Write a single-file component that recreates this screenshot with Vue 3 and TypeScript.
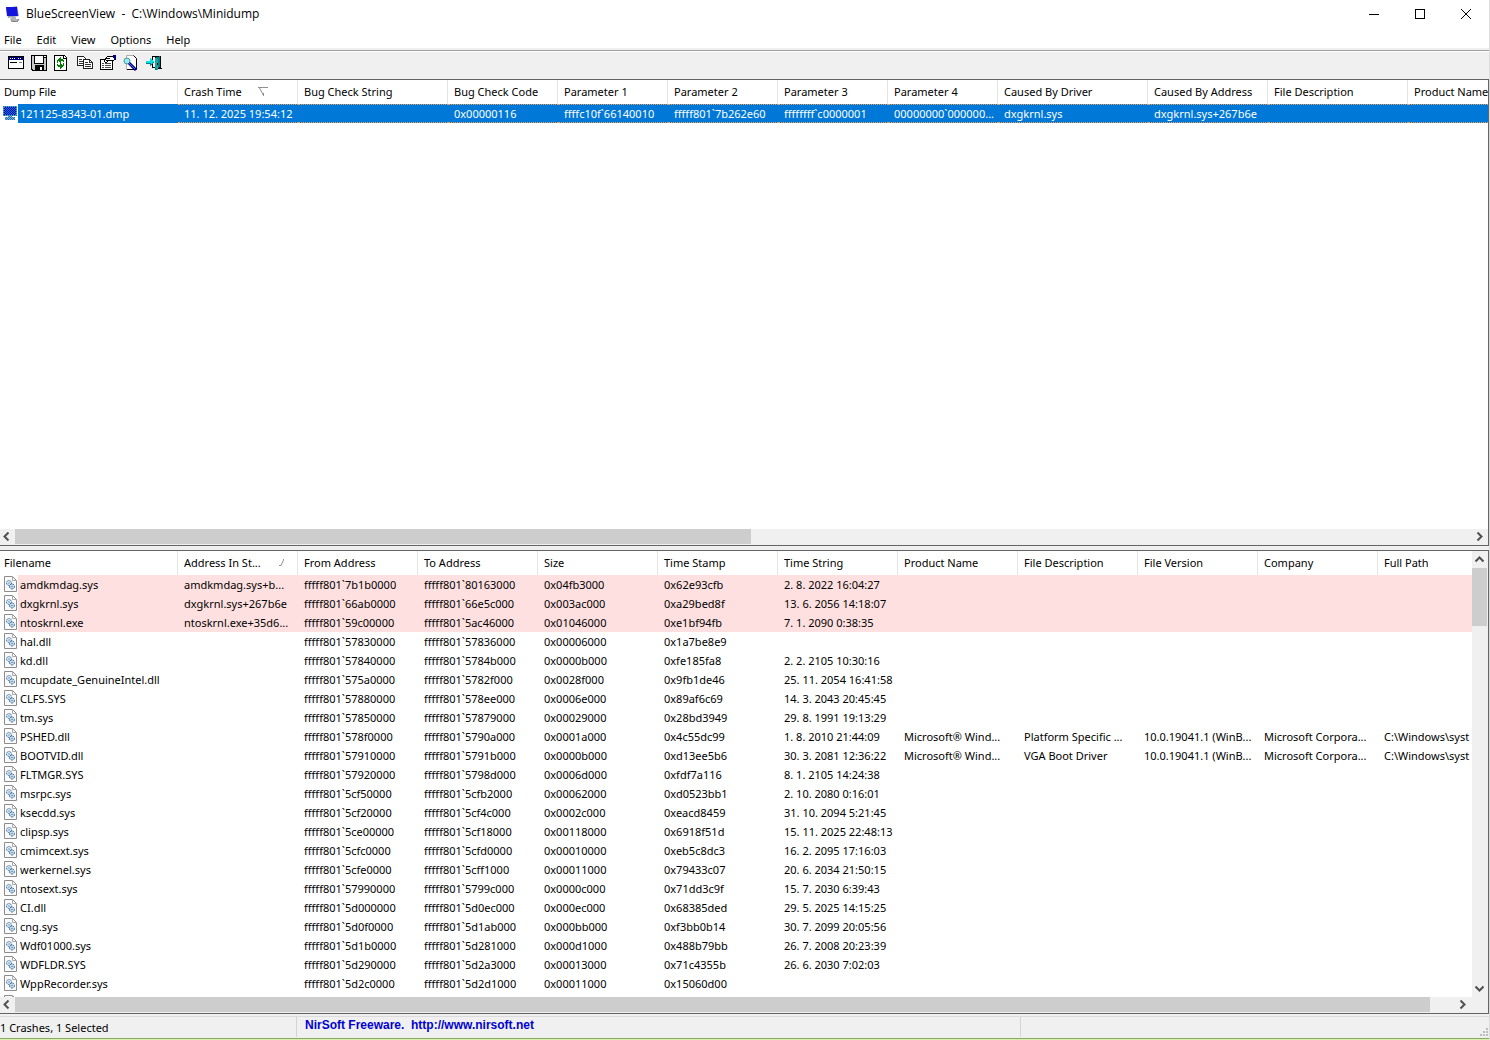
<script setup lang="ts">
interface Column {
  label: string
  width: number
  sort?: 'asc' | 'desc'
}

const menus: string[] = ['File', 'Edit', 'View', 'Options', 'Help']

const crashColumns: Column[] = [
  { label: 'Dump File', width: 178 },
  { label: 'Crash Time', width: 120, sort: 'desc' },
  { label: 'Bug Check String', width: 150 },
  { label: 'Bug Check Code', width: 110 },
  { label: 'Parameter 1', width: 110 },
  { label: 'Parameter 2', width: 110 },
  { label: 'Parameter 3', width: 110 },
  { label: 'Parameter 4', width: 110 },
  { label: 'Caused By Driver', width: 150 },
  { label: 'Caused By Address', width: 120 },
  { label: 'File Description', width: 140 },
  { label: 'Product Name', width: 140 },
]

const crash: string[] = [
  '121125-8343-01.dmp', '11. 12. 2025 19:54:12', '', '0x00000116', 'ffffc10f`66140010',
  'fffff801`7b262e60', 'ffffffff`c0000001', '00000000`000000...', 'dxgkrnl.sys',
  'dxgkrnl.sys+267b6e', '', '',
]

const driverColumns: Column[] = [
  { label: 'Filename', width: 178 },
  { label: 'Address In St...', width: 120, sort: 'asc' },
  { label: 'From Address', width: 120 },
  { label: 'To Address', width: 120 },
  { label: 'Size', width: 120 },
  { label: 'Time Stamp', width: 120 },
  { label: 'Time String', width: 120 },
  { label: 'Product Name', width: 120 },
  { label: 'File Description', width: 120 },
  { label: 'File Version', width: 120 },
  { label: 'Company', width: 120 },
  { label: 'Full Path', width: 180 },
]

const drivers: string[][] = [
  ['amdkmdag.sys', 'amdkmdag.sys+b...', 'fffff801`7b1b0000', 'fffff801`80163000', '0x04fb3000', '0x62e93cfb', '2. 8. 2022 16:04:27'],
  ['dxgkrnl.sys', 'dxgkrnl.sys+267b6e', 'fffff801`66ab0000', 'fffff801`66e5c000', '0x003ac000', '0xa29bed8f', '13. 6. 2056 14:18:07'],
  ['ntoskrnl.exe', 'ntoskrnl.exe+35d6...', 'fffff801`59c00000', 'fffff801`5ac46000', '0x01046000', '0xe1bf94fb', '7. 1. 2090 0:38:35'],
  ['hal.dll', '', 'fffff801`57830000', 'fffff801`57836000', '0x00006000', '0x1a7be8e9', ''],
  ['kd.dll', '', 'fffff801`57840000', 'fffff801`5784b000', '0x0000b000', '0xfe185fa8', '2. 2. 2105 10:30:16'],
  ['mcupdate_GenuineIntel.dll', '', 'fffff801`575a0000', 'fffff801`5782f000', '0x0028f000', '0x9fb1de46', '25. 11. 2054 16:41:58'],
  ['CLFS.SYS', '', 'fffff801`57880000', 'fffff801`578ee000', '0x0006e000', '0x89af6c69', '14. 3. 2043 20:45:45'],
  ['tm.sys', '', 'fffff801`57850000', 'fffff801`57879000', '0x00029000', '0x28bd3949', '29. 8. 1991 19:13:29'],
  ['PSHED.dll', '', 'fffff801`578f0000', 'fffff801`5790a000', '0x0001a000', '0x4c55dc99', '1. 8. 2010 21:44:09', 'Microsoft® Wind...', 'Platform Specific ...', '10.0.19041.1 (WinB...', 'Microsoft Corpora...', 'C:\\Windows\\syst'],
  ['BOOTVID.dll', '', 'fffff801`57910000', 'fffff801`5791b000', '0x0000b000', '0xd13ee5b6', '30. 3. 2081 12:36:22', 'Microsoft® Wind...', 'VGA Boot Driver', '10.0.19041.1 (WinB...', 'Microsoft Corpora...', 'C:\\Windows\\syst'],
  ['FLTMGR.SYS', '', 'fffff801`57920000', 'fffff801`5798d000', '0x0006d000', '0xfdf7a116', '8. 1. 2105 14:24:38'],
  ['msrpc.sys', '', 'fffff801`5cf50000', 'fffff801`5cfb2000', '0x00062000', '0xd0523bb1', '2. 10. 2080 0:16:01'],
  ['ksecdd.sys', '', 'fffff801`5cf20000', 'fffff801`5cf4c000', '0x0002c000', '0xeacd8459', '31. 10. 2094 5:21:45'],
  ['clipsp.sys', '', 'fffff801`5ce00000', 'fffff801`5cf18000', '0x00118000', '0x6918f51d', '15. 11. 2025 22:48:13'],
  ['cmimcext.sys', '', 'fffff801`5cfc0000', 'fffff801`5cfd0000', '0x00010000', '0xeb5c8dc3', '16. 2. 2095 17:16:03'],
  ['werkernel.sys', '', 'fffff801`5cfe0000', 'fffff801`5cff1000', '0x00011000', '0x79433c07', '20. 6. 2034 21:50:15'],
  ['ntosext.sys', '', 'fffff801`57990000', 'fffff801`5799c000', '0x0000c000', '0x71dd3c9f', '15. 7. 2030 6:39:43'],
  ['CI.dll', '', 'fffff801`5d000000', 'fffff801`5d0ec000', '0x000ec000', '0x68385ded', '29. 5. 2025 14:15:25'],
  ['cng.sys', '', 'fffff801`5d0f0000', 'fffff801`5d1ab000', '0x000bb000', '0xf3bb0b14', '30. 7. 2099 20:05:56'],
  ['Wdf01000.sys', '', 'fffff801`5d1b0000', 'fffff801`5d281000', '0x000d1000', '0x488b79bb', '26. 7. 2008 20:23:39'],
  ['WDFLDR.SYS', '', 'fffff801`5d290000', 'fffff801`5d2a3000', '0x00013000', '0x71c4355b', '26. 6. 2030 7:02:03'],
  ['WppRecorder.sys', '', 'fffff801`5d2c0000', 'fffff801`5d2d1000', '0x00011000', '0x15060d00', ''],
  [''],
]

const inStackCount = 3
</script>

<template>
  <div class="window">
    <header class="titlebar">
      <svg class="app-icon" width="16" height="16" viewBox="0 0 16 16" aria-hidden="true">
        <path d="M1 2 L12 0 L14 10 L3 12 Z" fill="#9aa4b8" />
        <path d="M1 1 L12 1 L13 10 L2 10 Z" fill="#1414dc" />
        <path d="M7 11 L11 11 L11 13 L14 13 L12 16 L6 15 L5 13 Z" fill="#b4b4b8" />
        <path d="M6 15 L12 16 L14 13" fill="none" stroke="#77777c" />
      </svg>
      <h1 class="title">BlueScreenView&nbsp; -&nbsp; C:\Windows\Minidump</h1>
      <div class="caption-buttons">
        <button type="button" aria-label="Minimize">
          <svg width="12" height="12" viewBox="0 0 12 12"><path d="M1 6.5H11" stroke="#000" /></svg>
        </button>
        <button type="button" aria-label="Maximize">
          <svg width="12" height="12" viewBox="0 0 12 12"><rect x="1.5" y="1.5" width="9" height="9" fill="none" stroke="#000" /></svg>
        </button>
        <button type="button" aria-label="Close">
          <svg width="12" height="12" viewBox="0 0 12 12"><path d="M1 1L11 11M11 1L1 11" stroke="#000" /></svg>
        </button>
      </div>
    </header>

    <nav class="menubar">
      <button v-for="menu in menus" :key="menu" type="button">{{ menu }}</button>
    </nav>

    <div class="toolbar" role="toolbar">
      <button type="button" aria-label="Advanced options">
        <svg width="16" height="16" viewBox="0 0 16 16" shape-rendering="crispEdges">
          <path d="M0 1H16V14H0Z" fill="#000" />
          <path d="M1 2H15V13H1Z" fill="#fff" />
          <path d="M1 2H15V5H1Z" fill="#000080" />
          <path d="M2 3h1v1h-1zM4 3h1v1h-1zM6 3h1v1h-1zM10 3h1v1h-1zM12 3h1v1h-1z" fill="#fff" />
          <path d="M2 7H9V8H2Z" fill="#000" />
          <path d="M11 7H14V8H11Z" fill="#808080" />
        </svg>
      </button>
      <button type="button" aria-label="Save">
        <svg width="16" height="16" viewBox="0 0 16 16" shape-rendering="crispEdges">
          <path d="M0 0H16V16H1L0 15Z" fill="#000" />
          <path d="M1 1H3V9H13V3H15V15H13V10H4V15H2L1 14Z" fill="#c8c8c8" />
          <path d="M4 1H12V8H4Z" fill="#fff" />
          <path d="M13 1H15V2H13Z" fill="#fff" />
          <path d="M5 11H11V15H5Z" fill="#000" />
          <path d="M9 12H11V15H9Z" fill="#fff" />
        </svg>
      </button>
      <button type="button" aria-label="Refresh">
        <svg width="16" height="16" viewBox="0 0 16 16" shape-rendering="crispEdges">
          <path d="M0 0H10L13 3V16H0Z" fill="#000" />
          <path d="M1 1H9V4H12V15H1Z" fill="#fff" />
          <path d="M10 1V3H12Z" fill="#fff" />
          <path d="M3 5H4V4H5V3H6V2H7V4H9V5H10V7H9V6H7V8H6V7H5V6H4V8H3Z" fill="#008000" />
          <path d="M10 11H9V12H8V13H7V14H6V12H4V11H3V9H4V10H6V8H7V9H8V10H9V8H10Z" fill="#008000" />
        </svg>
      </button>
      <button type="button" aria-label="Copy">
        <svg width="16" height="16" viewBox="0 0 16 16" shape-rendering="crispEdges">
          <path d="M.5 1.500H6.500L8.500 3.500V10.500H.5Z" fill="#fff" stroke="#202020" />
          <path d="M2 4.500H5M2 6.500H7M2 8.500H7" stroke="#303030" />
          <path d="M6.500 4.500H12.500L15.500 7.500V13.500H6.500Z" fill="#fff" stroke="#202020" />
          <path d="M12.500 4.500V7.500H15.500M8 7.500H11M8 9.500H14M8 11.500H14" fill="none" stroke="#303030" />
        </svg>
      </button>
      <button type="button" aria-label="Properties">
        <svg width="16" height="16" viewBox="0 0 16 16" shape-rendering="crispEdges">
          <path d="M.5 4.500H12.500V14.500H.5Z" fill="#fff" stroke="#000" />
          <path d="M2 8.500H4M5 8.500H11M2 10.500H4M5 10.500H11M2 12.500H4M5 12.500H11" stroke="#505050" />
          <path d="M4 6L8 1H12L14 3V5L11 6L9 5L6 8Z" fill="#fff" stroke="#000" />
          <path d="M7 3.500H10M6 5.500H8" stroke="#000" />
          <path d="M13 0H16V5H14V3H13Z" fill="#000080" />
        </svg>
      </button>
      <button type="button" aria-label="Find">
        <svg width="16" height="16" viewBox="0 0 16 16">
          <path d="M3.500 .5H10.500L13.500 3.500V14.500H3.500Z" fill="#fff" stroke="#b0b0b0" />
          <path d="M10.500 .5L13.500 3.500V14.500H4" fill="none" stroke="#000" />
          <circle cx="4" cy="6" r="3" fill="#8ff0f0" stroke="#5a8f9c" />
          <path d="M6 8L13 15" stroke="#000080" stroke-width="3" />
          <path d="M6 8L12 14" stroke="#3c6cf0" />
        </svg>
      </button>
      <button type="button" aria-label="Exit">
        <svg width="16" height="16" viewBox="0 0 16 16" shape-rendering="crispEdges">
          <path d="M6 1H15V13H16V14H12V15H10V13H6V9H7V12H9V2H7V5H6Z" fill="#000" />
          <path d="M9 3L14 1V12L10 15H9Z" fill="#008080" />
          <path d="M9 3L12 4V15L9 13Z" fill="#20a0a0" />
          <path d="M11 8H12V10H11Z" fill="#000" />
          <path d="M0 6H4V3L8 7L4 11V8H0Z" fill="#00e0e8" />
          <path d="M0 8H4V11L8 7" fill="none" stroke="#107880" />
        </svg>
      </button>
    </div>

    <main class="panes">
      <section class="pane crashes" aria-label="Crashes">
        <div class="list">
          <table>
            <colgroup><col v-for="c in crashColumns" :key="c.label" :style="{ width: c.width + 'px' }" /></colgroup>
            <thead>
              <tr>
                <th v-for="c in crashColumns" :key="c.label" scope="col">
                  <div class="head">
                    {{ c.label }}
                    <svg v-if="c.sort" class="desc" width="10" height="9" viewBox="0 0 10 9"><path d="M0 .5H10M1.500 1L5.500 8.500M5.500 6V9" fill="none" stroke="#909090" /></svg>
                  </div>
                </th>
              </tr>
            </thead>
            <tbody>
              <tr class="selected">
                <td v-for="(cell, i) in crash" :key="i">
                  <div v-if="i === 0" class="named">
                    <svg width="16" height="16" viewBox="0 0 16 16" shape-rendering="crispEdges" aria-hidden="true">
                      <defs>
                        <pattern id="dither" width="2" height="2" patternUnits="userSpaceOnUse">
                          <path d="M0 0H1V1H0ZM1 1H2V2H1Z" fill="#0078d7" />
                        </pattern>
                      </defs>
                      <path d="M1 1H15V11H1Z" fill="#8898b0" />
                      <path d="M2 2H14V10H2Z" fill="#0000a8" />
                      <path d="M6 11H10V12H13V15H3V12H6Z" fill="#a0a8b0" />
                      <path d="M1 1H15V11H10V12H13V15H3V12H6V11H1Z" fill="url(#dither)" />
                    </svg>
                    {{ cell }}
                  </div>
                  <template v-else>{{ cell }}</template>
                </td>
              </tr>
            </tbody>
          </table>
        </div>
        <div class="hscroll">
          <button type="button" aria-label="Scroll left"><svg width="7" height="9" viewBox="0 0 7 9"><path d="M5.500 .5L1.500 4.500L5.500 8.500" /></svg></button>
          <div class="track"><div class="thumb half"></div></div>
          <button type="button" aria-label="Scroll right"><svg width="7" height="9" viewBox="0 0 7 9"><path d="M1.500 .5L5.500 4.500L1.500 8.500" /></svg></button>
        </div>
      </section>

      <section class="pane drivers" aria-label="Drivers">
        <div class="with-vscroll">
          <div class="list">
            <table>
              <colgroup><col v-for="c in driverColumns" :key="c.label" :style="{ width: c.width + 'px' }" /></colgroup>
              <thead>
                <tr>
                  <th v-for="c in driverColumns" :key="c.label" scope="col">
                    <div class="head">
                      {{ c.label }}
                      <svg v-if="c.sort" class="asc" width="6" height="7" viewBox="0 0 6 7"><path d="M0 6.500H2L4.500 1V0" fill="none" stroke="#909090" /></svg>
                    </div>
                  </th>
                </tr>
              </thead>
              <tbody>
                <tr v-for="(row, r) in drivers" :key="r" :class="{ stack: r < inStackCount }">
                  <td v-for="(c, i) in driverColumns" :key="c.label">
                    <div v-if="i === 0" class="named">
                      <svg width="16" height="16" viewBox="0 0 16 16" aria-hidden="true">
                        <path d="M2.500 .5H10.500L14.500 4.500V15.500H2.500Z" fill="#fafafa" stroke="#8c8c8c" />
                        <path d="M10.500 .5V4.500H14.500" fill="none" stroke="#a8a8a8" />
                        <circle cx="7" cy="7" r="2.500" fill="#d4e6f4" stroke="#3c6e9c" stroke-dasharray="2 1" />
                        <circle cx="10" cy="10.500" r="2.500" fill="#c4dcf0" stroke="#285a8c" stroke-dasharray="2 1" />
                        <path d="M7 6.500V7.500M10 10V11" stroke="#285a8c" />
                      </svg>
                      {{ row[i] }}
                    </div>
                    <template v-else>{{ row[i] ?? '' }}</template>
                  </td>
                </tr>
              </tbody>
            </table>
          </div>
          <div class="vscroll">
            <button type="button" aria-label="Scroll up"><svg width="9" height="7" viewBox="0 0 9 7"><path d="M.5 5.500L4.500 1.500L8.500 5.500" /></svg></button>
            <div class="track"><div class="thumb"></div></div>
            <button type="button" aria-label="Scroll down"><svg width="9" height="7" viewBox="0 0 9 7"><path d="M.5 1.500L4.500 5.500L8.500 1.500" /></svg></button>
          </div>
        </div>
        <div class="hscroll">
          <button type="button" aria-label="Scroll left"><svg width="7" height="9" viewBox="0 0 7 9"><path d="M5.500 .5L1.500 4.500L5.500 8.500" /></svg></button>
          <div class="track"><div class="thumb most"></div></div>
          <button type="button" aria-label="Scroll right"><svg width="7" height="9" viewBox="0 0 7 9"><path d="M1.500 .5L5.500 4.500L1.500 8.500" /></svg></button>
          <div class="corner"></div>
        </div>
      </section>
    </main>

    <footer class="statusbar">
      <div class="count">1 Crashes, 1 Selected</div>
      <div class="credit"><a href="http://www.nirsoft.net">NirSoft Freeware.&nbsp; http://www.nirsoft.net</a></div>
      <div class="rest">
        <svg width="9" height="9" viewBox="0 0 9 9" aria-hidden="true"><path d="M6 0H8V2H6ZM3 3H5V5H3ZM6 3H8V5H6ZM0 6H2V8H0ZM3 6H5V8H3ZM6 6H8V8H6Z" fill="#bcbcbc" /></svg>
      </div>
    </footer>
  </div>
</template>

<style>
body {
  margin: 0;
}
</style>

<style scoped>
.window {
  display: flex;
  flex-direction: column;
  height: 100vh;
  box-sizing: border-box;
  overflow: hidden;
  border-right: 1px solid #dcdcdc;
  border-bottom: 1px solid #d8f0b0;
  background: #fff;
  color: #000;
  font: 11px/19px "Noto Sans", "Open Sans", sans-serif;
}

button {
  padding: 0;
  border: 0;
  background: none;
  color: inherit;
  font: inherit;
}

svg {
  display: block;
  flex: none;
}

.titlebar {
  display: flex;
  align-items: center;
  height: 28px;
  padding: 0 0 2px 5px;
  gap: 5px;
}

.title {
  flex: 1;
  margin: 0;
  font: 400 12px/18px "Open Sans", "Noto Sans", sans-serif;
}

.caption-buttons {
  display: flex;
}

.caption-buttons button {
  display: flex;
  align-items: center;
  justify-content: center;
  width: 46px;
  height: 28px;
}

.menubar {
  display: flex;
  gap: 15px;
  height: 18px;
  padding-left: 4px;
  border-bottom: 2px solid #f0f0f0;
}

.toolbar {
  display: flex;
  gap: 7px;
  height: 23px;
  padding: 4px 8px 0;
  border-top: 1px solid #a0a0a0;
  box-shadow: inset 0 1px #fff;
  background: #f0f0f0;
}

.toolbar button {
  width: 16px;
  height: 16px;
}

.panes {
  display: flex;
  flex: 1;
  flex-direction: column;
  gap: 4px;
  min-height: 0;
  padding-top: 1px;
  background: #f0f0f0;
}

.pane {
  display: flex;
  flex-direction: column;
  box-sizing: border-box;
  min-height: 0;
  border: solid #646464;
  border-width: 1px 1px 1px 0;
  background: #fff;
}

.crashes {
  flex: 467 1 0;
}

.drivers {
  flex: 464 1 0;
}

.with-vscroll {
  display: flex;
  flex: 1;
  min-height: 0;
}

.list {
  flex: 1;
  min-width: 0;
  min-height: 0;
  overflow: hidden;
}

table {
  width: 1px;
  table-layout: fixed;
  border-collapse: separate;
  border-spacing: 0;
}

th,
td {
  padding: 0 0 0 6px;
  overflow: hidden;
  text-align: left;
  font-weight: 400;
  white-space: nowrap;
}

th {
  height: 22px;
  padding-bottom: 2px;
  border-right: 1px solid #e5e5e5;
}

td {
  height: 19px;
}

th:first-child {
  padding-left: 4px;
}

td:first-child {
  padding-left: 2px;
}

.head,
.named {
  display: flex;
  align-items: center;
}

.head {
  justify-content: space-between;
}

.desc {
  margin-right: 29px;
}

.asc {
  margin-right: 12px;
}

.named {
  align-items: flex-start;
  gap: 2px;
}

.drivers .named svg {
  margin-top: 1px;
}

.stack td {
  background: #ffe0e0;
}

.stack td:first-child {
  background: linear-gradient(to right, #fff 18px, #ffe0e0 18px);
}

.selected td {
  height: 17px;
  border: dotted #e8a060;
  border-width: 1px 0;
  background: #0078d7;
  color: #fff;
  line-height: 17px;
}

.selected td:first-child {
  border-image: repeating-linear-gradient(to right, transparent 0 1px, transparent 1px 2px) 1;
  background: linear-gradient(to right, #fff 18px, #0078d7 18px);
}

.hscroll {
  display: flex;
  height: 16px;
  background: #f0f0f0;
}

.vscroll {
  display: flex;
  flex-direction: column;
  width: 16px;
  background: #f0f0f0;
}

.track {
  flex: 1;
}

.hscroll button,
.vscroll button {
  display: flex;
  align-items: center;
  justify-content: center;
}

.hscroll button {
  width: 15px;
  padding: 0 2px 1px 0;
}

.vscroll button {
  height: 17px;
  padding-right: 1px;
}

.hscroll path,
.vscroll path {
  fill: none;
  stroke: #505050;
  stroke-width: 2;
}

.thumb {
  background: #cdcdcd;
}

.hscroll .thumb {
  height: 15px;
}

.vscroll .thumb {
  width: 15px;
  height: 14%;
}

.half {
  width: 50.5%;
}

.most {
  width: 98.2%;
}

.corner {
  width: 17px;
}

.statusbar {
  display: flex;
  height: 24px;
  border-bottom: 1px solid #88a860;
  background: #f0f0f0;
  box-shadow: inset 0 2px #f0f0f0, inset 0 3px #dcdcdc;
}

.statusbar > div {
  box-sizing: border-box;
  height: 20px;
  margin-top: 3px;
  border-right: 1px solid #d4d4d4;
}

.count {
  flex: 0 0 297px;
  padding-top: 1px;
}

.credit {
  flex: 0 0 724px;
  padding-left: 8px;
  font: bold 12px/16px "Liberation Sans", Arial, sans-serif;
}

.credit a {
  color: #0000d0;
  text-decoration: none;
}

.statusbar .rest {
  display: flex;
  flex: 1;
  align-items: flex-end;
  justify-content: flex-end;
  border-right: 0;
}
</style>
